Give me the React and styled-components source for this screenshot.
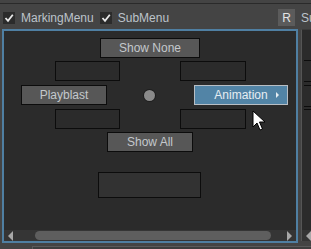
import React from 'react'
import styled, { createGlobalStyle } from 'styled-components';

const GlobalStyle = createGlobalStyle`
  html, body {
    margin: 0;
    padding: 0;
    background: #444444;
    overflow: hidden;
  }
  body {
    font-family: "Liberation Sans", Arial, sans-serif;
    font-size: 12px;
    color: #c4c8cc;
  }
`;

const Page = styled.div`
  width: 311px;
  height: 249px;
  display: flex;
  flex-direction: column;
  position: relative;
  overflow: hidden;
`;

const TopLine = styled.div`
  height: 3px;
  border-bottom: 1px solid #2a2a2a;
`;

const Toolbar = styled.div`
  box-sizing: border-box;
  height: 25px;
  padding-top: 2px;
  display: flex;
  align-items: center;
  padding-left: 3px;
`;

const Check = styled.span`
  width: 12px;
  height: 12px;
  background: #2b2b2b;
  display: flex;
  align-items: center;
  justify-content: center;
  margin-right: 6px;
  margin-left: ${({ $ml }) => $ml || 0}px;
`;

const Label = styled.span`
  color: #bcc3ca;
  font-size: 12px;
`;

const RButton = styled.span`
  width: 17px;
  height: 17px;
  margin-left: auto;
  margin-right: 6px;
  background: #5b5b5b;
  color: #e4e4e4;
  display: flex;
  align-items: center;
  justify-content: center;
  font-size: 12px;
`;

const Truncated = styled.span`
  width: 10px;
  overflow: hidden;
  white-space: nowrap;
  color: #bcc3ca;
`;

const Main = styled.div`
  display: flex;
  flex: 1;
`;

const Panel = styled.div`
  margin-left: 2px;
  width: 292px;
  height: 210px;
  border: 2px solid #4f7fa2;
  background: #2b2b2b;
  display: flex;
  flex-direction: column;
`;

const Row = styled.div`
  display: flex;
  height: ${({ $h }) => $h || 20}px;
  margin-top: ${({ $mt }) => $mt}px;
  align-items: center;
`;

const Item = styled.div`
  box-sizing: border-box;
  width: ${({ $w }) => $w}px;
  height: ${({ $h }) => $h || 20}px;
  margin-left: ${({ $ml }) => $ml}px;
  border: 1px solid ${({ $active }) => ($active ? '#b8bec4' : '#0c0c0c')};
  background: ${({ $active, $empty, $dim }) =>
    $active ? '#5284a6' : $empty ? '#2b2b2b' : $dim ? '#323232' : '#575757'};
  color: ${({ $active }) => ($active ? '#e6edf2' : '#c4c8cc')};
  display: flex;
  align-items: center;
  justify-content: center;
  font-size: 12px;
  position: relative;
`;

const Arrow = styled.span`
  position: absolute;
  right: 8px;
  top: 6px;
  width: 0;
  height: 0;
  border-top: 3px solid transparent;
  border-bottom: 3px solid transparent;
  border-left: 3px solid #e6edf2;
`;

const Dot = styled.span`
  width: 11px;
  height: 11px;
  margin-left: ${({ $ml }) => $ml}px;
  border-radius: 50%;
  background: #8a8a8a;
  box-shadow: 0 0 0 1px #1e1e1e;
`;

const Scrollbar = styled.div`
  margin-top: auto;
  height: 11px;
  background: #353535;
  display: flex;
  align-items: center;
`;

const Tri = styled.span`
  width: 0;
  height: 0;
  border-top: 5px solid transparent;
  border-bottom: 5px solid transparent;
  ${({ $dir }) =>
    $dir === 'left'
      ? 'border-right: 5px solid #a8a8a8; margin-left: 4px;'
      : 'border-left: 5px solid #a8a8a8; margin-left: 16px;'}
`;

const Thumb = styled.span`
  width: 236px;
  height: 9px;
  margin-left: 22px;
  background: #5e5e5e;
  border-radius: 5px;
`;

const SidePanel = styled.div`
  margin-left: 3px;
  flex: 1;
  height: 211px;
  border-left: 1px solid #555;
  border-top: 1px solid #3a3a3a;
  background: #2b2b2b;
  display: flex;
  flex-direction: column;
`;

const SideLine = styled.div`
  margin-top: ${({ $mt }) => $mt}px;
  margin-left: 2px;
  height: 1px;
  background: #0c0c0c;
`;

const SideScroll = styled.div`
  margin-top: auto;
  height: 11px;
  background: #353535;
  display: flex;
  align-items: center;
`;

const Footer = styled.div`
  height: 6px;
  display: flex;
`;

const Tab = styled.div`
  margin-left: 32px;
  margin-top: 3px;
  flex: 1;
  border-top: 1px solid #5a5a5a;
  border-left: 1px solid #5a5a5a;
  background: #3e3e3e;
`;

const Cursor = styled.svg`
  position: absolute;
  left: 252px;
  top: 110px;
`;

const CheckMark = () => (
  <svg width="10" height="10" viewBox="0 0 10 10">
    <polyline points="1.5,5 4,7.8 8.8,1.8" fill="none" stroke="#e8e8e8" strokeWidth="1.8" />
  </svg>
);

const App = () => {
  return (
    <Page>
      <GlobalStyle />
      <TopLine />
      <Toolbar>
        <Check><CheckMark /></Check>
        <Label>MarkingMenu</Label>
        <Check $ml={6}><CheckMark /></Check>
        <Label>SubMenu</Label>
        <RButton>R</RButton>
        <Truncated>Sub</Truncated>
      </Toolbar>
      <Main>
        <Panel>
          <Row $mt={7}>
            <Item $w={100} $ml={96}>Show None</Item>
          </Row>
          <Row $mt={3}>
            <Item $w={65} $ml={51} $empty />
            <Item $w={66} $ml={60} $empty />
          </Row>
          <Row $mt={4}>
            <Item $w={86} $ml={17}>Playblast</Item>
            <Dot $ml={37} />
            <Item $w={94} $ml={39} $active>
              Animation
              <Arrow />
            </Item>
          </Row>
          <Row $mt={4}>
            <Item $w={65} $ml={51} $empty />
            <Item $w={66} $ml={60} $empty />
          </Row>
          <Row $mt={3}>
            <Item $w={86} $ml={103}>Show All</Item>
          </Row>
          <Row $mt={20} $h={26}>
            <Item $w={103} $h={26} $ml={94} $dim />
          </Row>
          <Scrollbar>
            <Tri $dir="left" />
            <Thumb />
            <Tri $dir="right" />
          </Scrollbar>
        </Panel>
        <SidePanel>
          <SideLine $mt={30} />
          <SideLine $mt={20} />
          <SideLine $mt={3} />
          <SideLine $mt={20} />
          <SideLine $mt={2} />
          <SideScroll>
            <Tri $dir="left" />
          </SideScroll>
        </SidePanel>
      </Main>
      <Footer>
        <Tab />
      </Footer>
      <Cursor width="14" height="22" viewBox="0 0 14 22">
        <path d="M1 1 L1 17 L5 13 L8 20 L10.5 19 L7.5 12 L13 12 Z" fill="#ffffff" stroke="#000000" strokeWidth="1" />
      </Cursor>
    </Page>
  )
}

export default App
